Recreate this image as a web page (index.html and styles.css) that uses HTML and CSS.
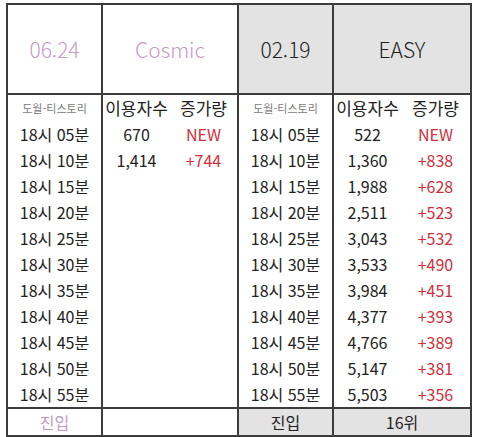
FILE: index.html
```html
<!DOCTYPE html>
<html lang="ko">
<head>
<meta charset="utf-8">
<link rel="stylesheet" href="styles.css">
</head>
<body>
<table class="board">
  <colgroup>
    <col class="c-time"><col class="c-num"><col class="c-num">
    <col class="c-time"><col class="c-num"><col class="c-num2">
  </colgroup>
  <tr class="head">
    <td class="pink date">06.24</td>
    <td colspan="2" class="pink name">Cosmic</td>
    <td class="gray date">02.19</td>
    <td colspan="2" class="gray name">EASY</td>
  </tr>
  <tr class="sub">
    <td class="src vline">도월-티스토리</td>
    <td>이용자수</td><td class="vline">증가량</td>
    <td class="src vline">도월-티스토리</td>
    <td>이용자수</td><td>증가량</td>
  </tr>
  <tr><td class="vline">18시 05분</td><td>670</td><td class="red vline">NEW</td><td class="vline">18시 05분</td><td>522</td><td class="red">NEW</td></tr>
  <tr><td class="vline">18시 10분</td><td>1,414</td><td class="red vline">+744</td><td class="vline">18시 10분</td><td>1,360</td><td class="red">+838</td></tr>
  <tr><td class="vline">18시 15분</td><td></td><td class="vline"></td><td class="vline">18시 15분</td><td>1,988</td><td class="red">+628</td></tr>
  <tr><td class="vline">18시 20분</td><td></td><td class="vline"></td><td class="vline">18시 20분</td><td>2,511</td><td class="red">+523</td></tr>
  <tr><td class="vline">18시 25분</td><td></td><td class="vline"></td><td class="vline">18시 25분</td><td>3,043</td><td class="red">+532</td></tr>
  <tr><td class="vline">18시 30분</td><td></td><td class="vline"></td><td class="vline">18시 30분</td><td>3,533</td><td class="red">+490</td></tr>
  <tr><td class="vline">18시 35분</td><td></td><td class="vline"></td><td class="vline">18시 35분</td><td>3,984</td><td class="red">+451</td></tr>
  <tr><td class="vline">18시 40분</td><td></td><td class="vline"></td><td class="vline">18시 40분</td><td>4,377</td><td class="red">+393</td></tr>
  <tr><td class="vline">18시 45분</td><td></td><td class="vline"></td><td class="vline">18시 45분</td><td>4,766</td><td class="red">+389</td></tr>
  <tr><td class="vline">18시 50분</td><td></td><td class="vline"></td><td class="vline">18시 50분</td><td>5,147</td><td class="red">+381</td></tr>
  <tr><td class="vline">18시 55분</td><td></td><td class="vline"></td><td class="vline">18시 55분</td><td>5,503</td><td class="red">+356</td></tr>
  <tr class="foot">
    <td class="pink">진입</td>
    <td colspan="2"></td>
    <td class="gray">진입</td>
    <td colspan="2" class="gray">16위</td>
  </tr>
</table>
</body>
</html>
```
FILE: styles.css
```css
html, body {
  margin: 0;
  padding: 0;
  background: #ffffff;
}
body {
  padding: 3px 0 0 6px;
  font-family: "Noto Sans CJK KR", "Noto Sans", sans-serif;
  color: #222222;
}
.board {
  border-collapse: collapse;
  table-layout: fixed;
  width: 464px;
  border: 2px solid #3c3c3c;
}
.c-time { width: 95px; }
.c-num { width: 68px; }
.c-num2 { width: 70px; }
.board td {
  padding: 0;
  text-align: center;
  font-size: 16px;
  line-height: 26px;
  height: 26px;
  white-space: nowrap;
  overflow: hidden;
}
.board td.vline {
  border-right: 2px solid #3c3c3c;
}
.head td {
  height: 88px;
  font-size: 21px;
  font-weight: 300;
  border-right: 2px solid #3c3c3c;
  border-bottom: 2px solid #3c3c3c;
}
.foot td {
  height: 26px;
  border-right: 2px solid #3c3c3c;
  border-top: 2px solid #3c3c3c;
}
.board .sub td {
  font-size: 17px;
}
.board .sub td.src {
  font-size: 11px;
  color: #7a7a7a;
}
.pink { color: #c49ac4; }
.red { color: #d0303a; }
.gray { background: #e3e3e3; }
```
